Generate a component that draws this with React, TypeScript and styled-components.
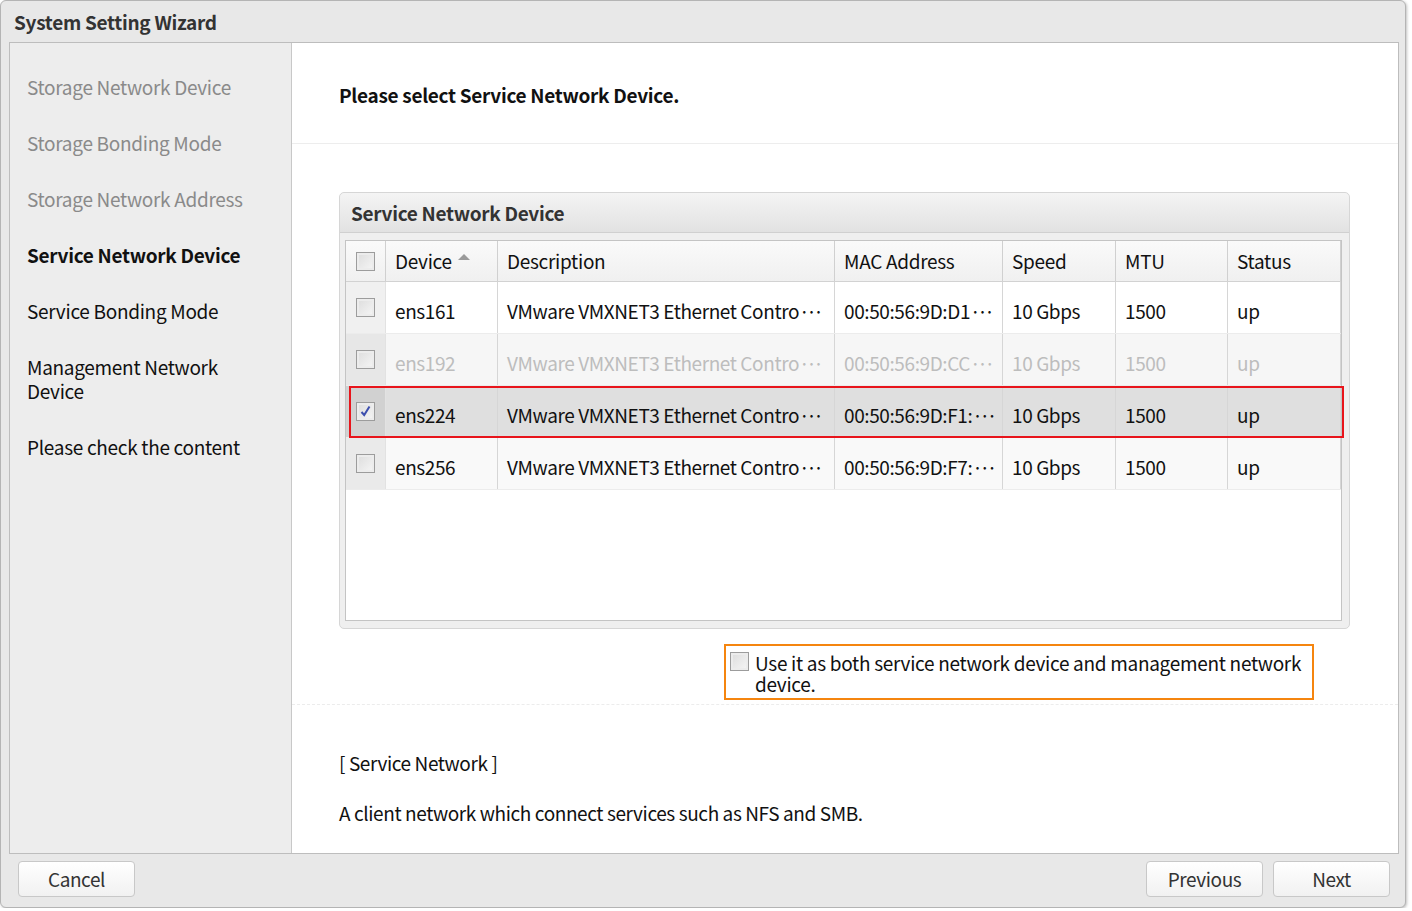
import styled, { createGlobalStyle, css } from 'styled-components'

const GlobalStyle = createGlobalStyle`
  html, body {
    margin: 0;
    padding: 0;
    background: #ffffff;
  }
  body {
    font-family: "Noto Sans CJK KR", "Noto Sans", sans-serif;
    color: #111;
  }
  * {
    box-sizing: border-box;
  }
`

const Frame = styled.div`
  width: 1406px;
  height: 908px;
  display: flex;
  flex-direction: column;
  background: #e8e8e8;
  border: 1px solid #b4b4b4;
  border-radius: 6px;
  box-shadow: 1px 1px 3px rgba(0, 0, 0, 0.25);
  overflow: hidden;
`

const TitleBar = styled.div`
  height: 41px;
  flex: none;
  display: flex;
  align-items: center;
  padding-left: 13px;
  font-size: 19px;
  font-weight: 700;
  color: #333;
  letter-spacing: -0.3px;
`

const Body = styled.div`
  flex: none;
  height: 812px;
  margin: 0 6px 0 8px;
  display: flex;
  border: 1px solid #bdbdbd;
  background: #fff;
`

const Nav = styled.div`
  width: 282px;
  flex: none;
  background: #ededed;
  border-right: 1px solid #c8c8c8;
  padding: 16px 0 0 17px;
  display: flex;
  flex-direction: column;
`

const NavItem = styled.div<{ $state: 'done' | 'current' | 'todo' }>`
  padding: 16px 16px 16px 0;
  font-size: 19px;
  line-height: 24px;
  letter-spacing: -0.3px;
  color: ${({ $state }) => ($state === 'done' ? '#8a8a8a' : '#111')};
  font-weight: ${({ $state }) => ($state === 'current' ? 700 : 400)};
`

const Content = styled.div`
  flex: 1;
  display: flex;
  flex-direction: column;
`

const Heading = styled.div`
  height: 101px;
  flex: none;
  border-bottom: 1px solid #ededed;
  padding: 39px 0 0 47px;
  font-size: 19px;
  font-weight: 700;
  line-height: 26px;
  letter-spacing: -0.3px;
`

const Panel = styled.div`
  margin: 48px 48px 0 47px;
  height: 437px;
  flex: none;
  display: flex;
  flex-direction: column;
  background: #efefef;
  border: 1px solid #d6d6d6;
  border-radius: 5px;
`

const PanelHeader = styled.div`
  height: 40px;
  flex: none;
  display: flex;
  align-items: center;
  padding-left: 11px;
  font-size: 19px;
  font-weight: 700;
  color: #333;
  letter-spacing: -0.3px;
  background: linear-gradient(#f4f4f4, #e2e2e2);
  border-bottom: 1px solid #d0d0d0;
  border-radius: 5px 5px 0 0;
`

const Grid = styled.div`
  flex: 1;
  margin: 7px 7px 7px 5px;
  background: #fff;
  border: 1px solid #c4c4c4;
  display: flex;
  flex-direction: column;
`

const columns = '40px 112px 337px 168px 113px 112px 113px'

const HeaderRow = styled.div`
  display: grid;
  grid-template-columns: ${columns};
  height: 41px;
  background: linear-gradient(#fafafa, #f0f0f0);
  border-bottom: 1px solid #d2d2d2;
`

const HeaderCell = styled.div`
  display: flex;
  align-items: center;
  padding: 0 0 2px 9px;
  font-size: 19px;
  letter-spacing: -0.3px;
  border-right: 1px solid #d0d0d0;
  color: #111;
`

const SortArrow = styled.span`
  display: inline-block;
  margin-left: 6px;
  width: 0;
  height: 0;
  border-left: 6px solid transparent;
  border-right: 6px solid transparent;
  border-bottom: 6px solid #9a9a9a;
  transform: translateY(-3px);
`

const Row = styled.div<{ $kind: 'plain' | 'alt' | 'disabled' | 'selected' }>`
  position: relative;
  display: grid;
  grid-template-columns: ${columns};
  height: 52px;
  border-bottom: 1px solid #ececec;
  color: ${({ $kind }) => ($kind === 'disabled' ? '#bdbdbd' : '#111')};
  background: ${({ $kind }) =>
    $kind === 'selected' ? '#dfdfdf' : $kind === 'disabled' ? '#f6f6f6' : $kind === 'alt' ? '#f9f9f9' : '#fff'};
  ${({ $kind }) =>
    $kind === 'selected' &&
    css`
      &::after {
        content: '';
        position: absolute;
        left: 3px;
        right: -3px;
        top: 0;
        bottom: -1px;
        border: 2px solid #e8141b;
        pointer-events: none;
      }
    `}
`

const Cell = styled.div`
  display: flex;
  align-items: center;
  padding: 5px 0 0 9px;
  font-size: 19px;
  letter-spacing: -0.4px;
  white-space: nowrap;
  overflow: hidden;
  border-right: 1px solid #d6d6d6;
`

const Dots = styled.span`
  letter-spacing: -3.5px;
  margin-left: 0;
`

const CheckCell = styled.div<{ $header?: boolean }>`
  display: flex;
  justify-content: center;
  align-items: ${({ $header }) => ($header ? 'center' : 'flex-start')};
  padding-top: ${({ $header }) => ($header ? '0' : '16px')};
  border-right: 1px solid ${({ $header }) => ($header ? '#d0d0d0' : '#e2e2e2')};
  background: ${({ $header }) => ($header ? 'transparent' : 'rgba(0, 0, 0, 0.06)')};
`

const Box = styled.span`
  width: 19px;
  height: 19px;
  flex: none;
  display: inline-flex;
  align-items: center;
  justify-content: center;
  border: 1px solid #9c9c9c;
  background: linear-gradient(135deg, #dcdcdc, #f6f6f6);
  box-shadow: inset 0 0 0 2px #ececec;
`

const Check = ({ checked }: { checked?: boolean }) => (
  <Box>
    {checked && (
      <svg width="13" height="13" viewBox="0 0 13 13">
        <path d="M2.5 7 L5.2 10 L10.5 1.5" fill="none" stroke="#3d4fae" strokeWidth="2" />
      </svg>
    )}
  </Box>
)

const Truncated = ({ text }: { text: string }) => (
  <>
    {text}
    <Dots>···</Dots>
  </>
)

const OptionLine = styled.div`
  display: flex;
  justify-content: flex-end;
  margin: 15px 84px 0 0;
`

const OptionBox = styled.label`
  width: 590px;
  height: 56px;
  display: flex;
  align-items: flex-start;
  gap: 6px;
  padding: 6px 4px 0 4px;
  border: 2px solid #f5850f;
  font-size: 19px;
  line-height: 21px;
  letter-spacing: -0.3px;
`

const DashedLine = styled.div`
  margin-top: 4px;
  border-top: 1px dashed #ececec;
`

const Description = styled.div`
  padding: 46px 0 0 47px;
  display: flex;
  flex-direction: column;
  gap: 26px;
  font-size: 19px;
  line-height: 24px;
  letter-spacing: -0.4px;
`

const Footer = styled.div`
  flex: 1;
  display: flex;
  align-items: flex-start;
  padding: 7px 15px 0 17px;
`

const Spacer = styled.div`
  flex: 1;
`

const Button = styled.button`
  width: 117px;
  height: 36px;
  margin-left: 10px;
  border: 1px solid #c8c8c8;
  border-radius: 4px;
  background: linear-gradient(#ffffff, #f1f1f1);
  font-family: "Noto Sans CJK KR", "Noto Sans", sans-serif;
  font-size: 19px;
  letter-spacing: -0.4px;
  color: #333;
  padding: 0 0 2px;
  &:first-child {
    margin-left: 0;
  }
`

const steps: { label: string; state: 'done' | 'current' | 'todo' }[] = [
  { label: 'Storage Network Device', state: 'done' },
  { label: 'Storage Bonding Mode', state: 'done' },
  { label: 'Storage Network Address', state: 'done' },
  { label: 'Service Network Device', state: 'current' },
  { label: 'Service Bonding Mode', state: 'todo' },
  { label: 'Management Network Device', state: 'todo' },
  { label: 'Please check the content', state: 'todo' },
]

const devices: { name: string; mac: string; kind: 'plain' | 'alt' | 'disabled' | 'selected' }[] = [
  { name: 'ens161', mac: '00:50:56:9D:D1', kind: 'plain' },
  { name: 'ens192', mac: '00:50:56:9D:CC', kind: 'disabled' },
  { name: 'ens224', mac: '00:50:56:9D:F1:', kind: 'selected' },
  { name: 'ens256', mac: '00:50:56:9D:F7:', kind: 'alt' },
]

export default function App() {
  return (
    <>
      <GlobalStyle />
      <Frame>
        <TitleBar>System Setting Wizard</TitleBar>
        <Body>
          <Nav>
            {steps.map((s) => (
              <NavItem key={s.label} $state={s.state}>
                {s.label === 'Management Network Device' ? (
                  <>
                    Management Network
                    <br />
                    Device
                  </>
                ) : (
                  s.label
                )}
              </NavItem>
            ))}
          </Nav>
          <Content>
            <Heading>Please select Service Network Device.</Heading>
            <Panel>
              <PanelHeader>Service Network Device</PanelHeader>
              <Grid>
                <HeaderRow>
                  <CheckCell $header>
                    <Check />
                  </CheckCell>
                  <HeaderCell>
                    Device
                    <SortArrow />
                  </HeaderCell>
                  <HeaderCell>Description</HeaderCell>
                  <HeaderCell>MAC Address</HeaderCell>
                  <HeaderCell>Speed</HeaderCell>
                  <HeaderCell>MTU</HeaderCell>
                  <HeaderCell>Status</HeaderCell>
                </HeaderRow>
                {devices.map((d) => (
                  <Row key={d.name} $kind={d.kind}>
                    <CheckCell>
                      <Check checked={d.kind === 'selected'} />
                    </CheckCell>
                    <Cell>{d.name}</Cell>
                    <Cell>
                      <Truncated text="VMware VMXNET3 Ethernet Contro" />
                    </Cell>
                    <Cell>
                      <Truncated text={d.mac} />
                    </Cell>
                    <Cell>10 Gbps</Cell>
                    <Cell>1500</Cell>
                    <Cell>up</Cell>
                  </Row>
                ))}
              </Grid>
            </Panel>
            <OptionLine>
              <OptionBox>
                <Check />
                <span>Use it as both service network device and management network device.</span>
              </OptionBox>
            </OptionLine>
            <DashedLine />
            <Description>
              <div>[ Service Network ]</div>
              <div>A client network which connect services such as NFS and SMB.</div>
            </Description>
          </Content>
        </Body>
        <Footer>
          <Button>Cancel</Button>
          <Spacer />
          <Button>Previous</Button>
          <Button>Next</Button>
        </Footer>
      </Frame>
    </>
  )
}
